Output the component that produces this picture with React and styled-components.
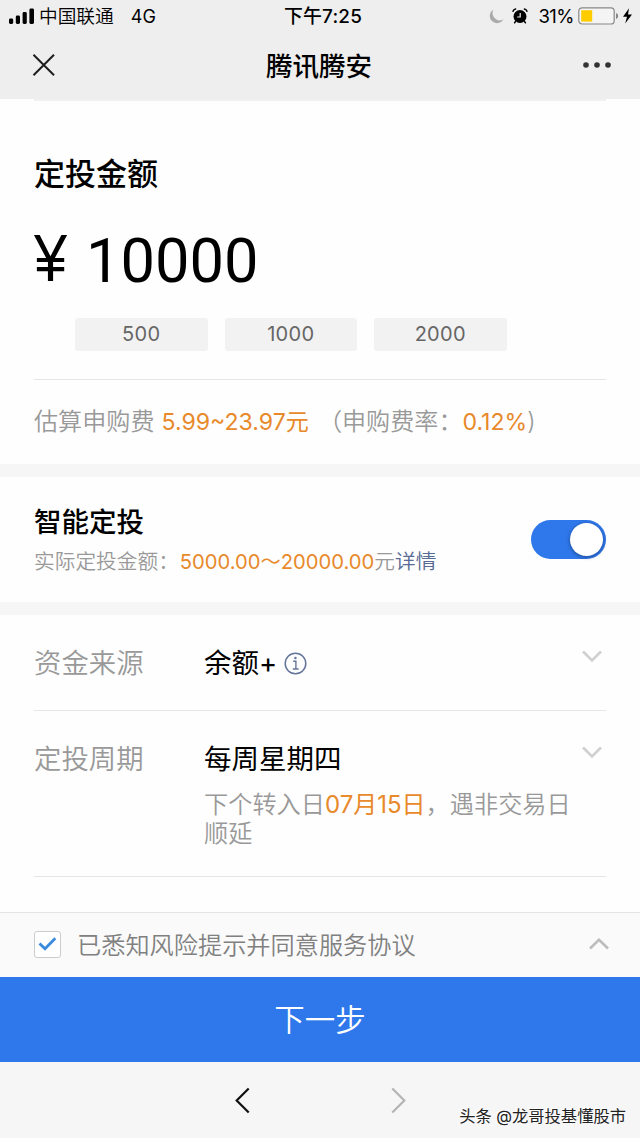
import React from "react";
import styled, { createGlobalStyle } from "styled-components";

const GlobalStyle = createGlobalStyle`
  * { box-sizing: border-box; }
  body {
    margin: 0;
    background: #fff;
    font-family: Inter, "Noto Sans CJK SC", sans-serif;
    color: #000;
  }
  button { font-family: inherit; border: 0; padding: 0; background: none; color: inherit; }
  svg { display: block; flex: none; }
`;

const Screen = styled.div`
  width: 640px;
  height: 1138px;
  display: flex;
  flex-direction: column;
  overflow: hidden;
  background: #fefefe;
  white-space: nowrap;
`;

const Header = styled.header`
  height: 99px;
  flex: none;
  background: #eee;
`;

const StatusBar = styled.div`
  height: 32px;
  padding: 0 7px 0 9px;
  display: grid;
  grid-template-columns: 1fr auto 1fr;
  grid-template-rows: 32px;
  align-items: center;
  font-size: 18.7px;
  line-height: 32px;
`;

const StatusGroup = styled.div`
  display: flex;
  align-items: center;
  justify-content: ${(p) => (p.$end ? "flex-end" : "flex-start")};
`;

const Carrier = styled.span`
  margin-left: 5px;
  padding-top: 1px;
  font-weight: 350;
`;

const Network = styled.span`
  margin-left: 17px;
  padding-top: 1px;
  font-size: 18px;
`;

const Clock = styled.span`
  padding: 2px 0 0 4px;
  font-weight: 500;
  font-size: 18.9px;
  letter-spacing: 0.2px;
`;

const Percent = styled.span`
  margin: 0 4px 0 10px;
  font-size: 18.5px;
  letter-spacing: -0.5px;
`;

const Charging = styled.span`
  margin-left: 3px;
`;

const AlarmSlot = styled.span`
  margin-left: 8px;
`;

const NavBar = styled.nav`
  height: 67px;
  padding: 0 29px 2px 32px;
  display: grid;
  grid-template-columns: 1fr auto 1fr;
  align-items: center;
`;

const NavEnd = styled.div`
  display: flex;
  justify-content: flex-end;
`;

const Title = styled.h1`
  margin: 0;
  padding: 2px 5px 0 0;
  font-size: 26.5px;
  line-height: 62px;
  font-weight: 500;
`;

const Section = styled.section`
  flex: none;
  height: ${(p) => p.$height}px;
  padding: 0 34px;
`;

const Band = styled.div`
  flex: none;
  height: 13px;
  background: #f6f6f6;
`;

const Rule = styled.div`
  height: ${(p) => (p.$faint ? 2 : 1)}px;
  background: ${(p) => (p.$faint ? "#f0f0f0" : "#e6e6e6")};
`;

const AmountLabel = styled.h2`
  margin: 53px 0 0;
  font-size: 31px;
  line-height: 40px;
  font-weight: 500;
`;

const Amount = styled.div`
  height: 82px;
  margin-top: 25px;
  display: flex;
  align-items: baseline;
  font-family: Roboto, sans-serif;
  font-size: 61.4px;
  line-height: 80px;
`;

const Yen = styled.span`
  width: 52px;
  font-family: "Liberation Sans", sans-serif;
  font-size: 66px;
  line-height: 80px;
  transform: translateY(-1px) scaleX(0.9);
  transform-origin: 0 50%;
`;

const Chips = styled.div`
  display: flex;
  gap: 17px;
  margin: 17px 0 28px 41px;
`;

const Chip = styled.button`
  width: 132.5px;
  height: 33px;
  border-radius: 3px;
  background: #f2f2f2;
  color: #666;
  font-size: 20px;
  line-height: 33px;
  letter-spacing: 0.3px;
`;

const Fee = styled.div`
  margin-top: 22px;
  color: #999;
  font-size: 24.1px;
  line-height: 40px;
  font-weight: 350;
`;

const Orange = styled.span`
  color: #e8892b;
  font-weight: 399;
  font-size: ${(p) => p.$size}px;
  margin-left: ${(p) => p.$left || 0}px;
`;

const Paren = styled.span`
  margin-left: 9px;
`;

const SmartRow = styled.div`
  height: 125px;
  display: flex;
  justify-content: space-between;
  align-items: center;
`;

const SmartTitle = styled.h2`
  margin: 1px 0 0;
  font-size: 27.5px;
  line-height: 40px;
  font-weight: 500;
`;

const SmartNote = styled.p`
  margin: 3px 0 0;
  font-size: 20.7px;
  line-height: 34px;
  font-weight: 350;
  color: #999;
`;

const Link = styled.a`
  color: #576b95;
`;

const Toggle = styled.button`
  width: 75px;
  height: 39px;
  padding: 3px;
  border-radius: 20px;
  background: #2f78ec;
  display: flex;
  justify-content: flex-end;
`;

const Knob = styled.span`
  width: 33px;
  height: 33px;
  border-radius: 50%;
  background: #fff;
  box-shadow: 0 1px 4px rgba(0, 0, 0, 0.4);
`;

const Field = styled.div`
  height: ${(p) => p.$height}px;
  padding-top: 28px;
  display: flex;
`;

const FieldLabel = styled.div`
  width: 170px;
  font-size: 27.4px;
  line-height: 40px;
  font-weight: 350;
  color: #999;
`;

const FieldBody = styled.div`
  flex: 1;
`;

const FieldValue = styled.div`
  display: flex;
  align-items: center;
  gap: 7px;
  font-size: 27.5px;
  line-height: 40px;
  font-weight: 399;
`;

const FieldNote = styled.p`
  margin: 11px 0 0;
  font-size: 24.2px;
  line-height: 29px;
  font-weight: 350;
  color: #999;
`;

const FieldArrow = styled.div`
  width: 24px;
  padding-top: 7px;
`;

const Agreement = styled.div`
  flex: none;
  height: 65px;
  padding: 0 31px 2px 34px;
  display: flex;
  align-items: center;
  border-top: 1px solid #e4e4e4;
  background: #fafafa;
`;

const Checkbox = styled.span`
  width: 27px;
  height: 27px;
  border: 1.5px solid #ccc;
  border-radius: 3px;
  background: #fff;
  display: flex;
  align-items: center;
  justify-content: center;
`;

const AgreementText = styled.span`
  flex: 1;
  margin-left: 16px;
  padding-top: 3px;
  font-size: 24.2px;
  line-height: 40px;
  font-weight: 350;
  color: #808080;
`;

const Next = styled.button`
  flex: none;
  height: 85px;
  background: #2f78ec;
  color: #fff;
  font-size: 30.5px;
  line-height: 83px;
  font-weight: 350;
`;

const Footer = styled.footer`
  position: relative;
  flex: none;
  height: 76px;
  display: flex;
  align-items: center;
  justify-content: center;
  gap: 141px;
  background: #f6f6f6;
`;

const Watermark = styled.span`
  position: absolute;
  right: 14px;
  bottom: 10px;
  font-size: 16.3px;
  line-height: 24px;
  color: #222;
  text-shadow: -1px -1px 0 #fff;
`;

const Signal = () => (
  <svg width="25" height="17" viewBox="0 0 25 17">
    <rect x="0" y="10.5" width="4.2" height="5.5" rx="1.4" />
    <rect x="6.8" y="7.5" width="4.2" height="8.5" rx="1.4" />
    <rect x="13.6" y="4" width="4.2" height="12" rx="1.4" />
    <rect x="20.4" y="0.5" width="4.6" height="15.5" rx="1.4" />
  </svg>
);

const Moon = () => (
  <svg width="15" height="15" viewBox="0 0 15 15">
    <path d="M4.5 .5A7.3 7.3 0 1 0 14.5 10.3A7.3 7.3 0 0 1 4.5 .5Z" fill="#aaa" />
  </svg>
);

const Alarm = () => (
  <svg width="16" height="16" viewBox="0 0 16 16">
    <circle cx="8" cy="8.5" r="6.5" />
    <path d="M3.6 13.4L2.6 14.8M12.4 13.4L13.4 14.8M1 3.2Q1.6 1.5 3.6 1.1M15 3.2Q14.4 1.5 12.4 1.1" fill="none" stroke="#000" strokeWidth="1.5" strokeLinecap="round" />
    <path d="M8.2 5V9H5.2" fill="none" stroke="#eee" strokeWidth="1.2" />
  </svg>
);

const Battery = () => (
  <svg width="41" height="18" viewBox="0 0 41 18">
    <rect x="0.8" y="0.8" width="35.4" height="16.2" rx="3.3" fill="#f4f4f4" stroke="#888" strokeWidth="1.2" />
    <rect x="3.2" y="3.2" width="11" height="11.4" fill="#fc0" />
    <path d="M38 6Q40.2 6.5 40.2 9T38 12Z" fill="#888" />
  </svg>
);

const Bolt = () => (
  <svg width="11" height="16" viewBox="0 0 11 16">
    <path d="M7 .3L1 8.7H5L3.2 15.6L10 6.5H6Z" />
  </svg>
);

const Close = () => (
  <svg width="24" height="24" viewBox="0 0 24 24">
    <path d="M1.5 1.8L22 22.3M22 1.8L1.5 22.3" stroke="#1d1d1d" strokeWidth="2" />
  </svg>
);

const More = () => (
  <svg width="28" height="8" viewBox="0 0 28 8">
    <circle cx="3" cy="4" r="2.8" fill="#333" />
    <circle cx="14" cy="4" r="2.8" fill="#333" />
    <circle cx="25" cy="4" r="2.8" fill="#333" />
  </svg>
);

const Arrow = ({ up }) => (
  <svg width="20" height="13" viewBox="0 0 20 13">
    <path d={up ? "M1 10.5L10 1.8L19 10.5" : "M1 1.5L10 10.5L19 1.5"} fill="none" stroke={up ? "#bdbdbd" : "#d0d0d0"} strokeWidth="2.6" />
  </svg>
);

const Info = () => (
  <svg width="23" height="23" viewBox="0 0 23 23" fill="none" stroke="#66759b" strokeWidth="1.5">
    <circle cx="11.5" cy="11.5" r="10.3" />
    <path d="M9.2 9.3H11.9V16.9M8.8 17H14.6" strokeWidth="1.4" />
    <circle cx="11.4" cy="6" r="1.3" fill="#66759b" stroke="none" />
  </svg>
);

const Check = () => (
  <svg width="19" height="16" viewBox="0 0 19 16">
    <path d="M1.5 7.5L7 12.7L17.3 2.3" fill="none" stroke="#3b8bdd" strokeWidth="2.8" />
  </svg>
);

const PageArrow = ({ forward }) => (
  <svg width="15" height="27" viewBox="0 0 15 27">
    <path d={forward ? "M1.3 1.5L13.3 13.5L1.3 25.5" : "M13.7 1.5L1.7 13.5L13.7 25.5"} fill="none" stroke={forward ? "#b4b4b4" : "#111"} strokeWidth="2.2" />
  </svg>
);

export default function App() {
  return (
    <>
      <GlobalStyle />
      <Screen>
        <Header>
          <StatusBar>
            <StatusGroup>
              <Signal />
              <Carrier>中国联通</Carrier>
              <Network>4G</Network>
            </StatusGroup>
            <Clock>下午7:25</Clock>
            <StatusGroup $end>
              <Moon />
              <AlarmSlot><Alarm /></AlarmSlot>
              <Percent>31%</Percent>
              <Battery />
              <Charging><Bolt /></Charging>
            </StatusGroup>
          </StatusBar>
          <NavBar>
            <Close />
            <Title>腾讯腾安</Title>
            <NavEnd><More /></NavEnd>
          </NavBar>
        </Header>

        <Section $height={365}>
          <Rule $faint />
          <AmountLabel>定投金额</AmountLabel>
          <Amount><Yen>¥</Yen>10000</Amount>
          <Chips>
            {["500", "1000", "2000"].map((v) => <Chip key={v}>{v}</Chip>)}
          </Chips>
          <Rule />
          <Fee>
            估算申购费
            <Orange $size={23.1} $left={7}>5.99~23.97元</Orange>
            <Paren>（申购费率：</Paren>
            <Orange $size={23.1}>0.12%</Orange>)
          </Fee>
        </Section>
        <Band />

        <Section $height={125}>
          <SmartRow>
            <div>
              <SmartTitle>智能定投</SmartTitle>
              <SmartNote>
                实际定投金额：
                <Orange $size={20.2} $left={1}>5000.00～20000.00</Orange>元<Link>详情</Link>
              </SmartNote>
            </div>
            <Toggle><Knob /></Toggle>
          </SmartRow>
        </Section>
        <Band />

        <Section $height={297}>
          <Field $height={95}>
            <FieldLabel>资金来源</FieldLabel>
            <FieldBody>
              <FieldValue>余额+<Info /></FieldValue>
            </FieldBody>
            <FieldArrow><Arrow /></FieldArrow>
          </Field>
          <Rule />
          <Field $height={165}>
            <FieldLabel>定投周期</FieldLabel>
            <FieldBody>
              <FieldValue>每周星期四</FieldValue>
              <FieldNote>
                下个转入日<Orange $size={24}>07月15日</Orange>，遇非交易日<br />顺延
              </FieldNote>
            </FieldBody>
            <FieldArrow><Arrow /></FieldArrow>
          </Field>
          <Rule />
        </Section>

        <Agreement>
          <Checkbox><Check /></Checkbox>
          <AgreementText>已悉知风险提示并同意服务协议</AgreementText>
          <Arrow up />
        </Agreement>
        <Next>下一步</Next>
        <Footer>
          <PageArrow />
          <PageArrow forward />
          <Watermark>头条 @龙哥投基懂股市</Watermark>
        </Footer>
      </Screen>
    </>
  );
}
